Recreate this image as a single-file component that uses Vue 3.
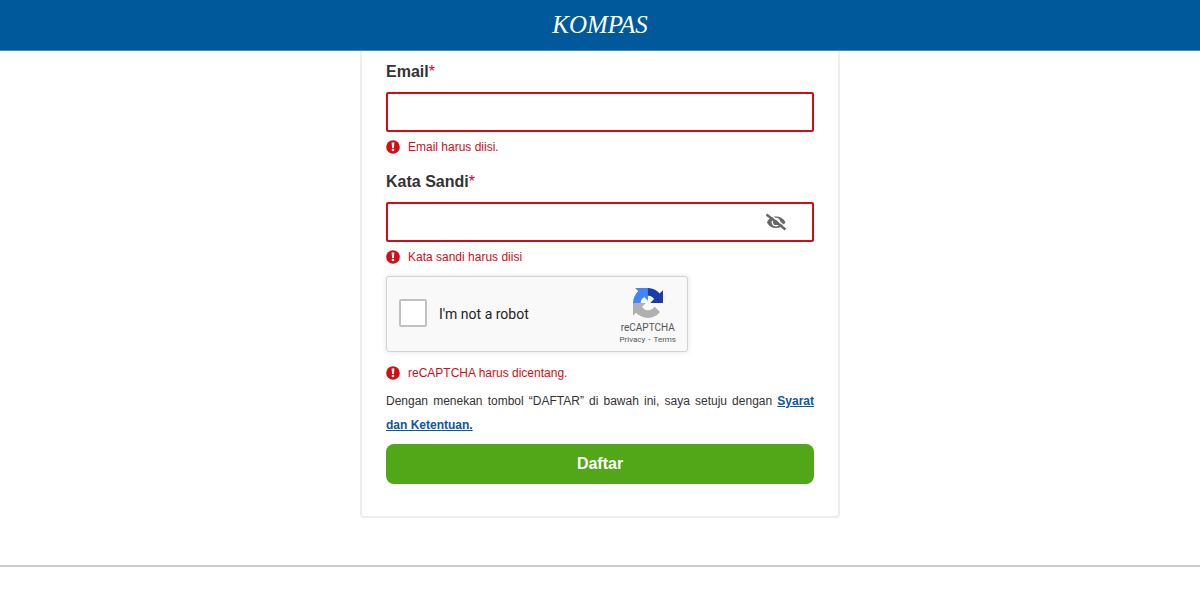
<script setup>
import { ref } from 'vue'

const email = ref('')
const password = ref('')
const notRobot = ref(false)
const showPassword = ref(false)
</script>

<template>
  <div class="page">
    <header class="topbar"><a class="brand" href="#">KOMPAS</a></header>

    <main class="content">
      <form class="card" novalidate @submit.prevent>
        <label class="label" for="email">Email<span class="required">*</span></label>
        <input id="email" v-model="email" class="field" type="email" aria-describedby="email-error" />
        <p id="email-error" class="error">
          <svg class="alert" viewBox="0 0 14 14" aria-hidden="true">
            <circle cx="7" cy="7" r="6.8" fill="#d20d16" />
            <path d="M5.6 2.6h2.8l-.5 5.4H6.1z" fill="#fff" />
            <circle cx="7" cy="10" r="1.3" fill="#fff" />
          </svg>
          <span>Email harus diisi.</span>
        </p>

        <label class="label" for="password">Kata Sandi<span class="required">*</span></label>
        <div class="password">
          <input
            id="password"
            v-model="password"
            class="field"
            :type="showPassword ? 'text' : 'password'"
            aria-describedby="password-error"
          />
          <button class="toggle" type="button" aria-label="Tampilkan kata sandi" @click="showPassword = !showPassword">
            <svg viewBox="0 0 24 24" aria-hidden="true">
              <path d="M3 12.2C4.500 8.500 8 6.500 12 6.500s7.500 2 9.500 5.700c-2 3.700-5.500 5.800-9.500 5.800s-7.500-2.100-9-5.800z" fill="#666" />
              <circle cx="12" cy="12.2" r="4.4" fill="#fff" />
              <circle cx="12" cy="12.2" r="2.9" fill="#666" />
              <path d="M3.5 2.5l19 15" stroke="#fff" stroke-width="1.5" />
              <path d="M2.5 4.5l19 15" stroke="#666" stroke-width="2.4" />
            </svg>
          </button>
        </div>
        <p id="password-error" class="error">
          <svg class="alert" viewBox="0 0 14 14" aria-hidden="true">
            <circle cx="7" cy="7" r="6.8" fill="#d20d16" />
            <path d="M5.6 2.6h2.8l-.5 5.4H6.1z" fill="#fff" />
            <circle cx="7" cy="10" r="1.3" fill="#fff" />
          </svg>
          <span>Kata sandi harus diisi</span>
        </p>

        <div class="captcha">
          <label class="robot">
            <input v-model="notRobot" class="tick" type="checkbox" />
            <span>I'm not a robot</span>
          </label>
          <div class="captcha-info">
            <svg class="captcha-logo" viewBox="0 0 64 64" aria-hidden="true">
              <path fill="#1c3aa9" d="M64 31.955l-.033-1.370V4.687l-7.160 7.160C50.948 4.674 42.033.093 32.050.093c-10.400 0-19.622 4.960-25.458 12.640l11.736 11.860a15.550 15.550 0 0 1 4.754-5.334c2.050-1.600 4.952-2.906 8.968-2.906.485 0 .860.057 1.135.163 4.976.393 9.288 3.140 11.828 7.124l-8.307 8.307L64 31.953" />
              <path fill="#4285f4" d="M31.862.094l-1.370.033H4.594l7.160 7.160C4.580 13.147 0 22.060 0 32.046c0 10.400 4.960 19.622 12.640 25.458L24.500 45.768a15.550 15.550 0 0 1-5.334-4.754c-1.600-2.050-2.906-4.952-2.906-8.968 0-.485.057-.860.163-1.135.393-4.976 3.140-9.288 7.124-11.828l8.307 8.307L31.860.095" />
              <path fill="#b0b0b0" d="M.001 32.045l.033 1.370v25.898l7.160-7.160c5.860 7.173 14.774 11.754 24.760 11.754 10.400 0 19.622-4.960 25.458-12.640l-11.736-11.860a15.550 15.550 0 0 1-4.754 5.334c-2.050 1.600-4.952 2.906-8.968 2.906-.485 0-.860-.057-1.135-.163-4.976-.393-9.288-3.140-11.828-7.124l8.307-8.307c-10.522.040-22.400.066-27.295-.005" />
            </svg>
            <span class="captcha-name">reCAPTCHA</span>
            <span class="captcha-links"><a href="#">Privacy</a><span>-</span><a href="#">Terms</a></span>
          </div>
        </div>
        <p class="error">
          <svg class="alert" viewBox="0 0 14 14" aria-hidden="true">
            <circle cx="7" cy="7" r="6.8" fill="#d20d16" />
            <path d="M5.6 2.6h2.8l-.5 5.4H6.1z" fill="#fff" />
            <circle cx="7" cy="10" r="1.3" fill="#fff" />
          </svg>
          <span>reCAPTCHA harus dicentang.</span>
        </p>

        <p class="terms">
          Dengan menekan tombol “DAFTAR” di bawah ini, saya setuju dengan
          <a href="#">Syarat dan Ketentuan.</a>
        </p>
        <button class="submit" type="submit">Daftar</button>
      </form>
    </main>

    <footer class="footer"></footer>
  </div>
</template>

<style>
body {
  background: #fff;
}
</style>

<style scoped>
.page {
  color: #333;
  font-family: "Liberation Sans", Arial, sans-serif;
}
.page * {
  box-sizing: border-box;
}
.topbar {
  display: flex;
  align-items: center;
  justify-content: center;
  height: 51px;
  background: #00599a;
  border-bottom: 1px solid #4a8aba;
}
.brand {
  color: #fff;
  font: italic 25px/50px "Liberation Serif", "Times New Roman", serif;
  text-decoration: none;
}
.content {
  display: flex;
  justify-content: center;
}
.card {
  width: 100%;
  max-width: 480px;
  padding: 9px 24px 32px;
  border: 2px solid #eee;
  border-top: 0;
  border-radius: 0 0 4px 4px;
}
.label {
  display: block;
  margin-bottom: 8px;
  font-size: 16px;
  font-weight: 700;
  line-height: 24px;
}
.required {
  color: #d6003c;
  font-weight: 400;
}
.field {
  display: block;
  width: 100%;
  height: 40px;
  padding: 0 12px;
  border: 2px solid #d20d16;
  border-radius: 2px;
  background: #fff;
  color: #333;
  font: 16px "Liberation Sans", Arial, sans-serif;
  outline: none;
}
.password {
  position: relative;
}
.password .field {
  padding-right: 52px;
}
.toggle {
  position: absolute;
  top: 8px;
  right: 26px;
  width: 24px;
  height: 24px;
  padding: 0;
  border: 0;
  background: none;
  cursor: pointer;
}
.toggle svg {
  display: block;
}
.error {
  display: flex;
  align-items: center;
  gap: 8px;
  margin: 7px 0 15px;
  color: #d20d16;
  font-size: 12px;
  line-height: 16px;
}
.alert {
  width: 14px;
  height: 14px;
}
.password + .error {
  margin-bottom: 11px;
}
.captcha {
  display: flex;
  align-items: center;
  justify-content: space-between;
  width: 302px;
  height: 76px;
  margin-bottom: 13px;
  padding: 0 11px 0 12px;
  border: 1px solid #d3d3d3;
  border-radius: 3px;
  background: #f9f9f9;
  box-shadow: 0 0 4px 1px rgba(0, 0, 0, 0.08);
  font-family: Roboto, sans-serif;
}
.robot {
  display: flex;
  align-items: center;
  gap: 12px;
  padding-bottom: 2px;
  color: #222;
  font-size: 14px;
  line-height: 16px;
}
.robot span {
  padding-top: 2px;
}
.tick {
  width: 28px;
  height: 28px;
  margin: 0;
  border: 2px solid #c1c1c1;
  border-radius: 2px;
  background: #fff;
  appearance: none;
}
.tick:checked {
  background: #4285f4;
}
.captcha-info {
  display: flex;
  flex-direction: column;
  align-items: center;
  padding-top: 6px;
  color: #555;
}
.captcha-logo {
  width: 30px;
  height: 30px;
}
.captcha-name {
  margin-top: 4px;
  font-size: 10px;
  line-height: 12px;
}
.captcha-links {
  display: flex;
  gap: 3px;
  font-size: 8px;
  line-height: 12px;
}
.captcha-links a {
  color: inherit;
  text-decoration: none;
}
.captcha + .error {
  margin-bottom: 8px;
}
.terms {
  margin: 0 0 7px;
  font-size: 12px;
  line-height: 24px;
  text-align: justify;
}
.terms a {
  color: #0a56a5;
  font-weight: 700;
}
.submit {
  display: block;
  width: 100%;
  height: 40px;
  border: 0;
  border-radius: 8px;
  background: #51a718;
  color: #fff;
  font: 700 16px/24px "Liberation Sans", Arial, sans-serif;
  cursor: pointer;
}
.footer {
  height: 32px;
  margin-top: 47px;
  border-top: 2px solid #ccc;
}
</style>
